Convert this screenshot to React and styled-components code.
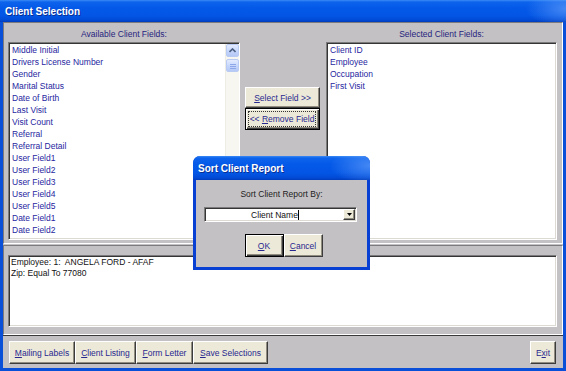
import React from 'react';
import styled, { createGlobalStyle, css } from 'styled-components';

const FACE = '#c4c1c4';
const BTN_FACE = '#ece9d8';
const NAVY = '#28288f';

const TITLE_BG = `
  radial-gradient(ellipse 40px 18px at 100% 40%, rgba(120, 175, 255, 0.55), rgba(120, 175, 255, 0) 100%),
  linear-gradient(to bottom, #3a8af6 0px, #0d63ec 2px, #0559e8 35%, #0356e5 70%, #014bd6 90%, #003cbc 100%)
`;

const GlobalStyle = createGlobalStyle`
  html, body {
    margin: 0;
    padding: 0;
    background: ${FACE};
  }
  body {
    font-family: "Liberation Sans", Arial, sans-serif;
    font-size: 8.5px;
  }
`;

const available = [
  'Middle Initial',
  'Drivers License Number',
  'Gender',
  'Marital Status',
  'Date of Birth',
  'Last Visit',
  'Visit Count',
  'Referral',
  'Referral Detail',
  'User Field1',
  'User Field2',
  'User Field3',
  'User Field4',
  'User Field5',
  'Date Field1',
  'Date Field2',
];

const selected = ['Client ID', 'Employee', 'Occupation', 'First Visit'];

const Chevron = ({ up }) => (
  <svg width="7" height="5" viewBox="0 0 7 5">
    <path
      d={up ? 'M0.5 4 L3.5 1 L6.5 4' : 'M0.5 1 L3.5 4 L6.5 1'}
      fill="none"
      stroke="#4d6185"
      strokeWidth="1.6"
    />
  </svg>
);

const Grip = () => (
  <svg width="6" height="6" viewBox="0 0 6 6">
    <path d="M0 1.5 H6 M0 3.5 H6 M0 5.5 H6" stroke="#8ea7e8" strokeWidth="1" />
  </svg>
);

const DropArrow = () => (
  <svg width="5" height="3" viewBox="0 0 5 3">
    <path d="M0 0 H5 L2.5 3 Z" fill="#000" />
  </svg>
);

// keeps the caption as one text run so the spaces next to <u> survive
const Caption3D = ({ focus, children }) => (
  <Label $focus={focus}>
    <span>{children}</span>
  </Label>
);

export default function App() {
  return (
    <>
      <GlobalStyle />
      <Window>
        <TitleBar>Client Selection</TitleBar>
        <Body>
          <FieldsPanel>
            <Column $w={232}>
              <Caption>Available Client Fields:</Caption>
              <ListBox>
                <Items>
                  {available.map(item => (
                    <Item key={item}>{item}</Item>
                  ))}
                </Items>
                <ScrollBar>
                  <ScrollPart><Chevron up /></ScrollPart>
                  <ScrollPart $thumb><Grip /></ScrollPart>
                  <ScrollPart $end><Chevron /></ScrollPart>
                </ScrollBar>
              </ListBox>
            </Column>
            <MoveButtons>
              <Button $w={75} $h={21}>
                <Caption3D><u>S</u>elect Field &gt;&gt;</Caption3D>
              </Button>
              <Button $w={75} $h={22} $default>
                <Caption3D focus>&lt;&lt; <u>R</u>emove Field</Caption3D>
              </Button>
            </MoveButtons>
            <Column $w={231}>
              <Caption>Selected Client Fields:</Caption>
              <ListBox>
                <Items>
                  {selected.map(item => (
                    <Item key={item}>{item}</Item>
                  ))}
                </Items>
              </ListBox>
            </Column>
          </FieldsPanel>

          <CriteriaPanel>
            <CriteriaBox>
              <CriteriaLine>Employee: 1:&nbsp; ANGELA FORD - AFAF</CriteriaLine>
              <CriteriaLine>Zip: Equal To 77080</CriteriaLine>
            </CriteriaBox>
          </CriteriaPanel>

          <ActionBar>
            <ButtonGroup>
              <Button $w={66}><Caption3D><u>M</u>ailing Labels</Caption3D></Button>
              <Button $w={61}><Caption3D><u>C</u>lient Listing</Caption3D></Button>
              <Button $w={57}><Caption3D><u>F</u>orm Letter</Caption3D></Button>
              <Button $w={75}><Caption3D><u>S</u>ave Selections</Caption3D></Button>
            </ButtonGroup>
            <Button $w={26}><Caption3D>E<u>x</u>it</Caption3D></Button>
          </ActionBar>
        </Body>

        <Dialog>
          <DialogTitle>Sort Client Report</DialogTitle>
          <DialogBody>
            <DialogCaption>Sort Client Report By:</DialogCaption>
            <Combo>
              <ComboText>
                Client Name<Caret />
              </ComboText>
              <ComboButton><DropArrow /></ComboButton>
            </Combo>
            <DialogButtons>
              <Button $w={39} $default><Caption3D><u>O</u>K</Caption3D></Button>
              <Button $w={39}><Caption3D><u>C</u>ancel</Caption3D></Button>
            </DialogButtons>
          </DialogBody>
        </Dialog>
      </Window>
    </>
  );
}

const Window = styled.div`
  position: relative;
  width: 566px;
  height: 371px;
  display: flex;
  flex-direction: column;
  background: #0a4fd8;
  overflow: hidden;
`;

const TitleBar = styled.div`
  flex: none;
  height: 22px;
  display: flex;
  align-items: center;
  padding-left: 5px;
  background: ${TITLE_BG};
  color: #fff;
  font-size: 10px;
  font-weight: bold;
  text-shadow: 1px 1px 0 #0b2f92;
`;

const Body = styled.div`
  flex: 1;
  margin: 0 3px 3px;
  display: flex;
  flex-direction: column;
  background: ${FACE};
`;

const sunken = css`
  border: 1px solid;
  border-color: #7c7a7c #fff #fff #7c7a7c;
`;

const FieldsPanel = styled.div`
  ${sunken};
  box-sizing: border-box;
  height: 222px;
  padding: 4px 5px 3px 4px;
  display: flex;
`;

const Column = styled.div`
  width: ${p => p.$w}px;
  display: flex;
  flex-direction: column;
`;

const Caption = styled.div`
  height: 15px;
  line-height: 15px;
  text-align: center;
  color: #24247e;
`;

const ListBox = styled.div`
  box-sizing: border-box;
  height: 198px;
  display: flex;
  background: #fff;
  border: 1px solid;
  border-color: #7b7b7b #fff #fff #7b7b7b;
  box-shadow: inset 1px 1px 0 #353535, inset -1px -1px 0 #dcdad2;
`;

const Items = styled.div`
  flex: 1;
  padding: 1px 0 0 3px;
`;

const Item = styled.div`
  height: 12px;
  line-height: 12px;
  color: #2626a0;
  white-space: nowrap;
`;

const ScrollBar = styled.div`
  width: 13px;
  margin: 1px 0 1px 0;
  display: flex;
  flex-direction: column;
  background: #f7f6f0;
  border-left: 1px solid #eeede5;
`;

const ScrollPart = styled.div`
  box-sizing: border-box;
  height: 13px;
  margin-top: ${p => (p.$thumb ? 2 : 0)}px;
  ${p => p.$end && 'margin-top: auto;'}
  display: flex;
  align-items: center;
  justify-content: center;
  border: 1px solid #b9cbf3;
  border-radius: 2px;
  background: linear-gradient(to bottom, #e3ebff, #c3d4fb 60%, #b5c9f6);
`;

const MoveButtons = styled.div`
  width: 86px;
  box-sizing: border-box;
  padding: 60px 0 0 5px;
  display: flex;
  flex-direction: column;
  align-items: flex-start;
`;

const Button = styled.button`
  box-sizing: border-box;
  width: ${p => p.$w}px;
  height: ${p => p.$h || 23}px;
  padding: 1px;
  display: flex;
  font: inherit;
  font-size: 8.5px;
  color: ${NAVY};
  background: ${BTN_FACE};
  border: 1px solid;
  border-color: #fff #3c3c3c #3c3c3c #fff;
  box-shadow: inset -1px -1px 0 #908d80;
  cursor: default;

  ${p =>
    p.$default &&
    css`
      border-color: #000;
      box-shadow: inset 1px 1px 0 #fff, inset -1px -1px 0 #3c3c3c,
        inset -2px -2px 0 #908d80;
    `}

  u {
    text-decoration: underline;
    text-underline-offset: 1px;
  }
`;

const Label = styled.span`
  flex: 1;
  display: flex;
  align-items: center;
  justify-content: center;
  white-space: nowrap;
  box-sizing: border-box;
  ${p => p.$focus && 'margin: 1px 2px 1px 1px; border: 1px dotted #333;'}
`;

const CriteriaPanel = styled.div`
  ${sunken};
  box-sizing: border-box;
  height: 90px;
  margin-top: 1px;
  padding: 9px 5px 7px 4px;
  display: flex;
`;

const CriteriaBox = styled.div`
  flex: 1;
  box-sizing: border-box;
  padding: 1px 0 0 2px;
  background: #fff;
  border: 1px solid;
  border-color: #7b7b7b #fff #fff #7b7b7b;
  box-shadow: inset 1px 1px 0 #353535, inset -1px -1px 0 #dcdad2;
`;

const CriteriaLine = styled.div`
  height: 11px;
  line-height: 11px;
  color: #111;
  white-space: nowrap;
`;

const ActionBar = styled.div`
  flex: 1;
  border-top: 1px solid #3a3a3a;
  padding: 5px 7px 0 6px;
  display: flex;
  justify-content: space-between;
  align-items: flex-start;
`;

const ButtonGroup = styled.div`
  display: flex;
`;

const Dialog = styled.div`
  position: absolute;
  left: 193px;
  top: 156px;
  width: 177px;
  height: 114px;
  display: flex;
  flex-direction: column;
  background: #0840d4;
  border-radius: 7px 7px 0 0;
  overflow: hidden;
`;

const DialogTitle = styled.div`
  flex: none;
  height: 24px;
  display: flex;
  align-items: center;
  padding-left: 5px;
  background: ${TITLE_BG};
  color: #fff;
  font-size: 10px;
  font-weight: bold;
  text-shadow: 1px 1px 0 #0b2f92;
`;

const DialogBody = styled.div`
  flex: 1;
  margin: 0 3px 3px;
  padding-top: 8px;
  display: flex;
  flex-direction: column;
  align-items: center;
  background: ${FACE};
`;

const DialogCaption = styled.div`
  height: 12px;
  line-height: 12px;
  color: #222;
`;

const Combo = styled.div`
  align-self: flex-start;
  box-sizing: border-box;
  width: 153px;
  height: 15px;
  margin: 7px 0 0 8px;
  display: flex;
  align-items: center;
  padding: 1px 1px 1px 2px;
  background: #fff;
  border: 1px solid;
  border-color: #7b7b7b #fff #fff #7b7b7b;
  box-shadow: inset 1px 1px 0 #353535, inset -1px -1px 0 #dcdad2;
`;

const ComboText = styled.div`
  flex: 1;
  display: flex;
  align-items: center;
  justify-content: center;
  color: #111;
`;

const Caret = styled.span`
  width: 1px;
  height: 10px;
  background: #000;
`;

const ComboButton = styled.div`
  box-sizing: border-box;
  width: 12px;
  height: 11px;
  display: flex;
  align-items: center;
  justify-content: center;
  background: ${BTN_FACE};
  border: 1px solid;
  border-color: #fff #3c3c3c #3c3c3c #fff;
  box-shadow: inset -1px -1px 0 #908d80;
`;

const DialogButtons = styled.div`
  display: flex;
  margin-top: 12px;
  padding-left: 4px;
`;
